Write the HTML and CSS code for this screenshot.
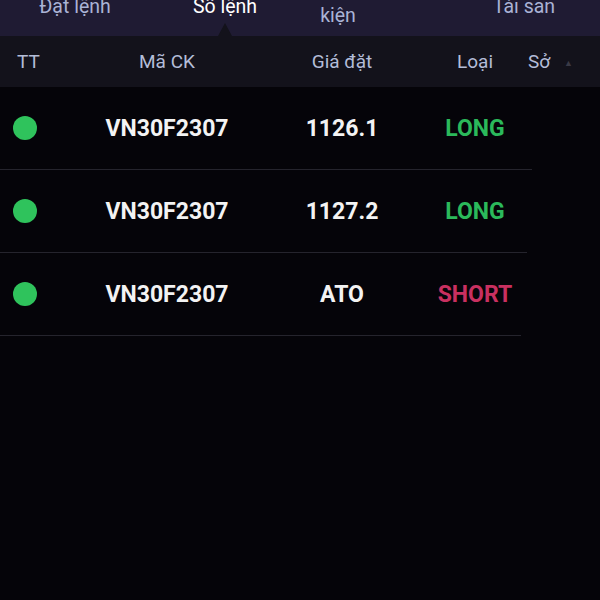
FILE: index.html
```html
<!DOCTYPE html>
<html lang="vi">
<head>
  <meta charset="UTF-8" /><meta name="viewport" content="width=device-width,initial-scale=1"/>
  <title>Sổ lệnh</title>
  <link rel="stylesheet" href="styles.css">
</head>
<body>

  <!-- Tabs -->
  <div class="tabs">
    <div class="tab tab-order">Đặt lệnh</div>
    <div class="tab tab-book active">Sổ lệnh</div>
    <div class="tab tab-cond">Điều<br>kiện</div>
    <div class="tab tab-asset">Tài sản</div>
  </div>

  <!-- Order book -->
  <div class="head">
    <span class="c-tt">TT</span>
    <span>Mã CK</span>
    <span>Giá đặt</span>
    <span class="c-type">Loại</span>
    <span class="c-more">Sở<i class="hint">▲</i></span>
  </div>

  <div class="rows">
    <div class="row">
      <span class="c-tt"><b class="dot"></b></span>
      <span>VN30F2307</span>
      <span>1126.1</span>
      <span class="c-type long">LONG</span>
    </div>
    <div class="row">
      <span class="c-tt"><b class="dot"></b></span>
      <span>VN30F2307</span>
      <span>1127.2</span>
      <span class="c-type long">LONG</span>
    </div>
    <div class="row">
      <span class="c-tt"><b class="dot"></b></span>
      <span>VN30F2307</span>
      <span>ATO</span>
      <span class="c-type short">SHORT</span>
    </div>
  </div>

</body>
</html>
```

FILE: styles.css
```css
body { margin: 0; background: #050409; font-family: Roboto, "Noto Sans", sans-serif; overflow: hidden; }

.tabs { display: flex; align-items: center; height: 60px; margin-top: -24px; background: #1f1b33; color: #aab3d6; font-size: 19.5px; line-height: 27px; }
.tab { position: relative; text-align: center; white-space: nowrap; }
.tab-order { width: 150px; }
.tab-book { width: 150px; }
.tab-cond { width: 76px; line-height: 24px; top: -2px; }
.tab-asset { width: 74px; margin-left: 111px; }
.tab.active { color: #fff; }
.tab.active::after { content: ""; position: absolute; left: 50%; top: 30px; margin-left: -7px; border: 7px solid transparent; border-top: 0; border-bottom: 13px solid #13121b; }

.head, .row { display: grid; grid-template-columns: 60px 214px 136px 118px 1fr; align-items: center; }
.head > span, .row > span { text-align: center; }
.head { height: 51px; background: #13121b; color: #b4bdd8; font-size: 19px; }
.head .c-tt { text-align: left; padding-left: 17px; }
.c-type { padding-left: 12px; }
.head .c-more { text-align: left; position: relative; }
.hint { position: absolute; left: 36px; top: 8px; font-style: normal; font-size: 9px; color: #3a3a46; }

.row { height: 83px; border-bottom: 1px solid #25242d; color: #f3f3f3; font-size: 23px; font-weight: bold; box-sizing: border-box; }
.row:nth-child(1) { width: 532px; }
.row:nth-child(2) { width: 527px; }
.row:nth-child(3) { width: 521px; }
.row .c-tt { text-align: left; padding-left: 13px; }
.dot { display: block; width: 24px; height: 24px; border-radius: 50%; background: #2fc35c; }
.long { color: #2bb95b; }
.short { color: #c93060; }
```
